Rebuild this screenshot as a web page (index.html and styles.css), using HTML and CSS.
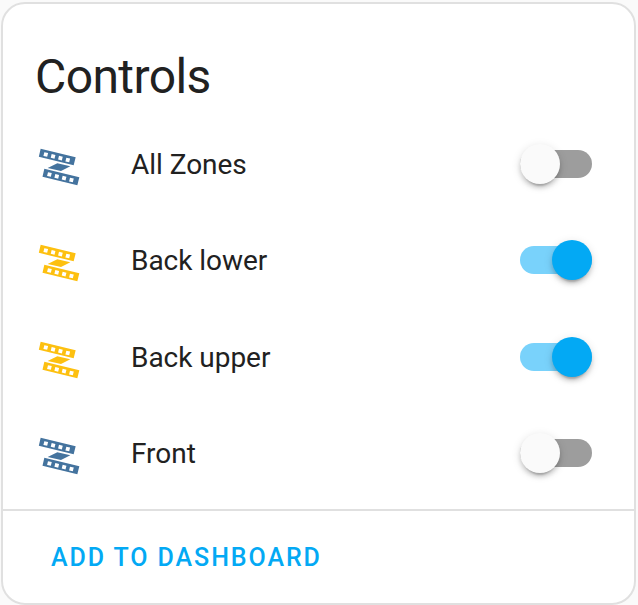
FILE: index.html
```
<!DOCTYPE html>
<html lang="en">
<head>
<meta charset="utf-8">
<title>Controls</title>
<link rel="stylesheet" href="styles.css">
</head>
<body>
<svg class="defs" aria-hidden="true">
  <symbol id="led-strip" viewBox="15 0 144 144">
    <path fill-rule="evenodd" d="M32 26.500L137 52L131 76L26.500 50.500ZM43 36.500l11.300 2.800l-2.800 11.300l-11.300-2.800ZM65 42l11.300 2.800l-2.800 11.300l-11.300-2.800ZM87 47.500l11.300 2.800l-2.800 11.300l-11.300-2.800ZM109 53l11.300 2.800l-2.800 11.300l-11.300-2.800ZM53 84L82 70L121 79L93 93ZM43 86.500L148 112L142 136L37.500 110.500ZM54 96.500l11.300 2.800l-2.800 11.300l-11.300-2.800ZM76 102l11.300 2.800l-2.800 11.300l-11.300-2.800ZM98 107.500l11.300 2.800l-2.800 11.300l-11.300-2.800ZM120 113l11.300 2.800l-2.800 11.300l-11.300-2.800Z"/>
  </symbol>
</svg>
<main class="card">
  <h1 class="title">Controls</h1>
  <div class="rows">
    <div class="row">
      <svg class="icon"><use href="#led-strip"/></svg>
      <span class="name">All Zones</span>
      <span class="switch" role="switch" aria-checked="false"><span class="thumb"></span></span>
    </div>
    <div class="row">
      <svg class="icon active"><use href="#led-strip"/></svg>
      <span class="name">Back lower</span>
      <span class="switch on" role="switch" aria-checked="true"><span class="thumb"></span></span>
    </div>
    <div class="row">
      <svg class="icon active"><use href="#led-strip"/></svg>
      <span class="name">Back upper</span>
      <span class="switch on" role="switch" aria-checked="true"><span class="thumb"></span></span>
    </div>
    <div class="row">
      <svg class="icon"><use href="#led-strip"/></svg>
      <span class="name">Front</span>
      <span class="switch" role="switch" aria-checked="false"><span class="thumb"></span></span>
    </div>
  </div>
  <footer class="actions"><button class="add" type="button">ADD TO DASHBOARD</button></footer>
</main>
</body>
</html>
```
FILE: styles.css
```
* { box-sizing: border-box; }
body {
  margin: 0;
  padding: 2px 2px 0 1px;
  height: 605px;
  overflow: hidden;
  background: #fafafa;
  color: #212121;
  font-family: Roboto, sans-serif;
}
.defs { display: none; }
.card {
  display: flex;
  flex-direction: column;
  height: 603px;
  border: 2px solid #e0e0e0;
  border-radius: 24px;
  background: #fff;
}
.title {
  margin: 0;
  padding: 25px 32px 0;
  height: 120px;
  font-size: 48px;
  line-height: 96px;
  font-weight: 400;
  letter-spacing: -0.6px;
}
.rows {
  display: grid;
  gap: 16.4px;
  padding: 0 42px 0 32px;
}
.row {
  display: flex;
  align-items: center;
  height: 80px;
}
.icon { width: 48px; height: 48px; fill: #44739e; }
.icon.active { fill: #fdc010; }
.name { flex: 1; margin-left: 48px; padding-top: 2px; font-size: 28px; line-height: 40px; letter-spacing: -0.03px; }
.switch {
  display: flex;
  align-items: center;
  width: 72px;
  height: 28px;
  border-radius: 14px;
  background: #9d9d9d;
}
.thumb {
  flex: none;
  width: 40px;
  height: 40px;
  border-radius: 50%;
  background: #fafafa;
  box-shadow: 0 6px 2px -4px rgba(0, 0, 0, .2), 0 4px 4px rgba(0, 0, 0, .14), 0 2px 10px rgba(0, 0, 0, .12);
}
.switch.on { justify-content: flex-end; background: #79d2fb; }
.switch.on .thumb { background: #03a9f4; }
.actions {
  display: flex;
  align-items: center;
  margin-top: auto;
  height: 94px;
  padding-left: 32px;
  border-top: 2px solid #e0e0e0;
}
.add {
  padding: 2px 16px 0;
  border: 0;
  background: none;
  color: #03a9f4;
  font: 500 25px/72px Roboto, sans-serif;
  letter-spacing: 1.92px;
}
```
